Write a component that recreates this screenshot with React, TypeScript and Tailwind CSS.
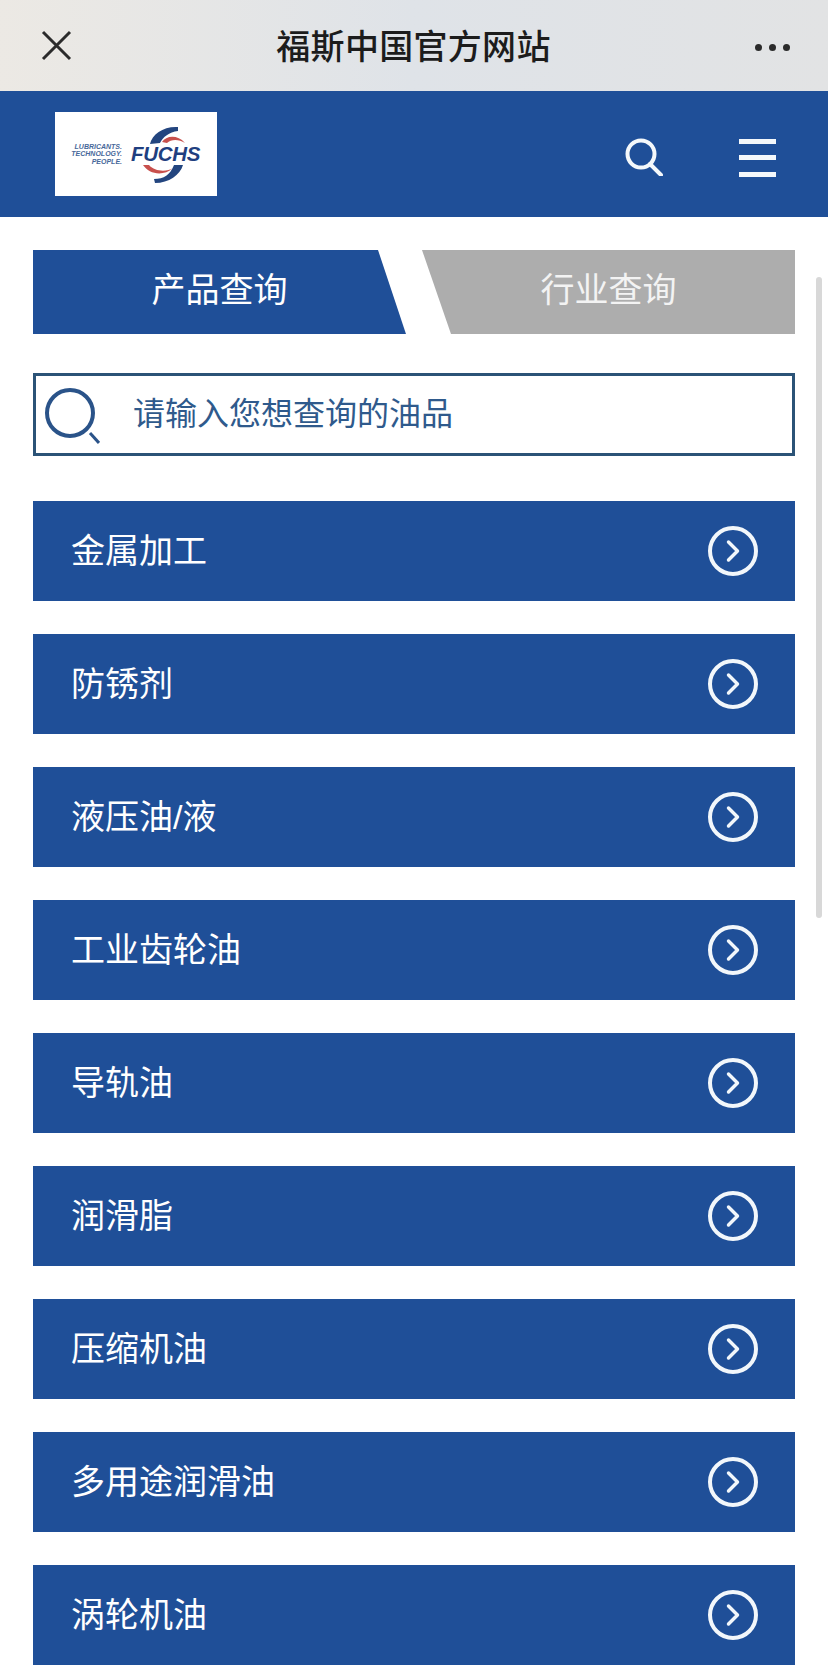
import { ChevronRight } from "lucide-react";

const CATEGORIES = [
  "金属加工",
  "防锈剂",
  "液压油/液",
  "工业齿轮油",
  "导轨油",
  "润滑脂",
  "压缩机油",
  "多用途润滑油",
  "涡轮机油",
];

function FuchsLogo() {
  return (
    <div className="w-[162px] h-[84px] bg-white flex items-center pl-[17px] shrink-0">
      <div className="w-[50px] flex flex-col items-end text-[7px] leading-[7.5px] font-bold italic text-[#47689a] whitespace-nowrap">
        <span>LUBRICANTS.</span>
        <span>TECHNOLOGY.</span>
        <span>PEOPLE.</span>
      </div>
      <div className="relative ml-[9px] w-[70px] h-[84px] flex items-center">
        <svg className="absolute left-0 top-0" width="70" height="84" viewBox="0 0 70 84" fill="none">
          <path d="M19 32C21 22 33 14 47 15L47 19C38 20 32 25 29 31Z" fill="#23457f" />
          <path d="M31 30C35 24 46 22 54 31C48 27 40 27 36 31Z" fill="#c8504c" />
          <path d="M12 53C18 62 32 65 42 56C36 60 24 60 18 53Z" fill="#c8504c" />
          <path d="M52 53C49 63 38 71 24 71L23 67C33 67 39 63 43 53Z" fill="#23457f" />
        </svg>
        <span className="relative text-[20.5px] leading-none font-bold italic text-[#1f3f80] tracking-[-0.3px]">
          FUCHS
        </span>
      </div>
    </div>
  );
}

function CategoryRow({ label }: { label: string }) {
  return (
    <div className="h-[100px] bg-[#1f4f98] flex items-center justify-between pl-[38px] pr-[37px]">
      <span className="text-[34px] leading-none text-white">{label}</span>
      <div className="w-[50px] h-[50px] rounded-full border-[4px] border-[#f2f7fb] flex items-center justify-center">
        <ChevronRight size={36} strokeWidth={2.3} className="text-[#f2f7fb]" />
      </div>
    </div>
  );
}

export default function App() {
  return (
    <div className="relative w-full h-[1671px] overflow-hidden bg-white font-['Liberation_Sans','Noto_Sans_CJK_SC',sans-serif]">
      {/* wechat title bar */}
      <div className="h-[91px] flex items-center justify-between pl-[41px] pr-[38px] bg-gradient-to-r from-[#ece9e4] via-[#dfe3e8] to-[#e2e3e4]">
        <svg width="31" height="31" viewBox="0 0 31 31" fill="none" stroke="#2b2b2b" strokeWidth="3">
          <path d="M2 2L29 29M29 2L2 29" />
        </svg>
        <span className="text-[34px] leading-none font-medium text-[#1c1c1c] tracking-[0.3px] pt-[2px]">福斯中国官方网站</span>
        <div className="flex gap-[7px] pt-[4px]">
          <span className="w-[7px] h-[7px] rounded-full bg-[#2b2b2b]" />
          <span className="w-[7px] h-[7px] rounded-full bg-[#2b2b2b]" />
          <span className="w-[7px] h-[7px] rounded-full bg-[#2b2b2b]" />
        </div>
      </div>

      {/* site header */}
      <div className="h-[126px] bg-[#1f4f98] flex items-center pl-[55px] pr-[52px]">
        <FuchsLogo />
        <svg className="ml-auto mt-[6px]" width="38" height="38" viewBox="0 0 38 38" fill="none" stroke="#f4f8fb" strokeWidth="4">
          <circle cx="16" cy="16" r="13.5" />
          <path d="M25 26L36 37" strokeLinecap="round" />
        </svg>
        <div className="ml-[76px] mt-[7px] w-[37px] h-[38px] flex flex-col justify-between">
          <span className="h-[5px] bg-[#f4f8fb]" />
          <span className="h-[5px] bg-[#f4f8fb]" />
          <span className="h-[5px] bg-[#f4f8fb]" />
        </div>
      </div>

      <div className="px-[33px] pt-[33px]">
        <div className="grid grid-cols-2 gap-4 h-[84px]">
          <div className="bg-[#1f4f98] flex items-center justify-center text-[34px] text-white pb-[4px] [clip-path:polygon(0_0,345px_0,100%_100%,0_100%)]">
            产品查询
          </div>
          <div className="bg-[#adadad] flex items-center justify-center text-[34px] text-[#f3f3f3] pb-[4px] [clip-path:polygon(0_0,100%_0,100%_100%,29px_100%)]">
            行业查询
          </div>
        </div>

        <div className="mt-[39px] h-[83px] border-[3px] border-[#2b5377] flex items-center pl-[8px]">
          <svg width="56" height="58" viewBox="0 0 56 58" fill="none" stroke="#2a5389">
            <circle cx="26" cy="27" r="23" strokeWidth="4" />
            <path d="M46 47L55 57" strokeWidth="3" />
          </svg>
          <span className="ml-[33px] text-[32px] leading-none text-[#2f5a8c] pb-[2px]">请输入您想查询的油品</span>
        </div>

        <div className="mt-[45px] flex flex-col gap-[33px]">
          {CATEGORIES.map((label) => (
            <CategoryRow key={label} label={label} />
          ))}
        </div>
      </div>

      {/* page scrollbar */}
      <div className="absolute left-[816px] top-[277px] w-[6px] h-[641px] rounded-full bg-[#d8d8d8]" />
    </div>
  );
}
